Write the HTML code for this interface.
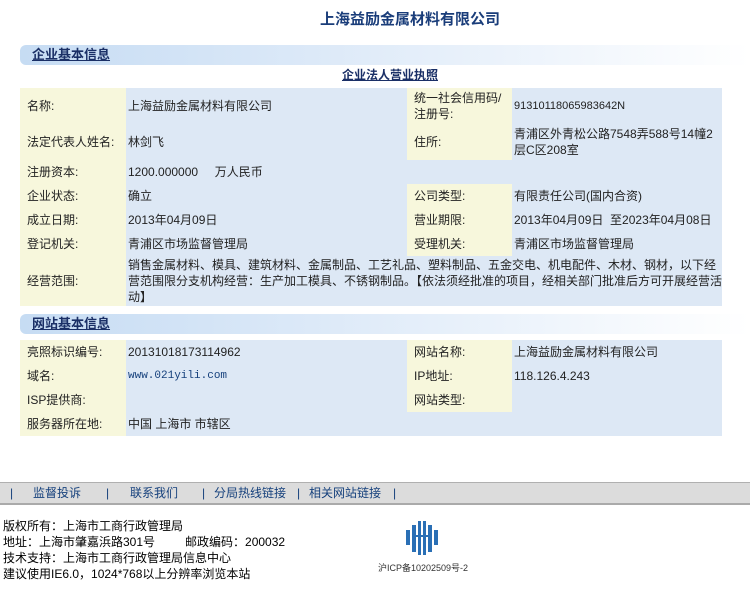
<!DOCTYPE html><html><head><meta charset="utf-8"><style>
body{margin:0;width:750px;height:589px;background:#fff;font-family:"Liberation Sans","SimSun","Noto Sans CJK SC",sans-serif;font-size:12px;color:#222;position:relative;overflow:hidden}
.a{position:absolute}
.title{left:0;width:820px;top:8px;text-align:center;font-size:15px;font-weight:bold;color:#1a3d7a}
.bar{left:20px;width:730px;height:20px;border-radius:6px 0 0 6px;background:linear-gradient(90deg,#c6dcf3,#dce9f8 40%,#fff);font-weight:bold;font-size:13px;color:#1a2f66;line-height:20px;text-indent:12px;text-decoration:underline}
.sub{left:0;width:780px;top:66px;text-align:center;font-weight:bold;font-size:12px;color:#1a2f66;text-decoration:underline}
table{position:absolute;left:20px;width:702px;border-collapse:collapse;table-layout:fixed}
td{padding:0 0 0 2px;vertical-align:middle;line-height:16px}
td.l{background:#f7f7dc;padding-left:7px}
td.v{background:#dde8f5}
.nav{left:0;top:482px;width:750px;height:20px;background:#dcdcdc;border-top:1px solid #b0b0b0;border-bottom:2px solid #aaa;line-height:20px;font-size:12px;color:#15407c}
.foot{left:3px;top:518px;line-height:16px;font-size:12px;color:#000}
</style></head><body>
<div class="a title">上海益励金属材料有限公司</div>
<div class="a bar" style="top:45px">企业基本信息</div>
<div class="a sub">企业法人营业执照</div>
<table style="top:88px">
<col style="width:106px"><col style="width:281px"><col style="width:105px"><col style="width:210px">
<tr style="height:36px"><td class="l">名称:</td><td class="v">上海益励金属材料有限公司</td><td class="l">统一社会信用码/<br>注册号:</td><td class="v" style="font-size:11px">91310118065983642N</td></tr>
<tr style="height:36px"><td class="l">法定代表人姓名:</td><td class="v">林剑飞</td><td class="l">住所:</td><td class="v">青浦区外青松公路7548弄588号14幢2层C区208室</td></tr>
<tr style="height:24px"><td class="l">注册资本:</td><td class="v">1200.000000&nbsp;&nbsp;&nbsp;&nbsp; 万人民币</td><td class="v"></td><td class="v"></td></tr>
<tr style="height:24px"><td class="l">企业状态:</td><td class="v">确立</td><td class="l">公司类型:</td><td class="v">有限责任公司(国内合资)</td></tr>
<tr style="height:24px"><td class="l">成立日期:</td><td class="v">2013年04月09日</td><td class="l">营业期限:</td><td class="v">2013年04月09日&nbsp; 至2023年04月08日</td></tr>
<tr style="height:24px"><td class="l">登记机关:</td><td class="v">青浦区市场监督管理局</td><td class="l">受理机关:</td><td class="v">青浦区市场监督管理局</td></tr>
<tr style="height:50px"><td class="l">经营范围:</td><td class="v" colspan="3">销售金属材料、模具、建筑材料、金属制品、工艺礼品、塑料制品、五金交电、机电配件、木材、钢材，以下经营范围限分支机构经营：生产加工模具、不锈钢制品。【依法须经批准的项目，经相关部门批准后方可开展经营活动】</td></tr>
</table>
<div class="a bar" style="top:314px">网站基本信息</div>
<table style="top:340px">
<col style="width:106px"><col style="width:281px"><col style="width:105px"><col style="width:210px">
<tr style="height:24px"><td class="l">亮照标识编号:</td><td class="v">20131018173114962</td><td class="l">网站名称:</td><td class="v">上海益励金属材料有限公司</td></tr>
<tr style="height:24px"><td class="l">域名:</td><td class="v" style="font-family:'Liberation Mono',monospace;font-size:11px;color:#15407c">www.021yili.com</td><td class="l">IP地址:</td><td class="v">118.126.4.243</td></tr>
<tr style="height:24px"><td class="l">ISP提供商:</td><td class="v"></td><td class="l">网站类型:</td><td class="v"></td></tr>
<tr style="height:24px"><td class="l">服务器所在地:</td><td class="v">中国 上海市 市辖区</td><td class="v"></td><td class="v"></td></tr>
</table>
<div class="a nav"><span class="a" style="left:10px">|</span><span class="a" style="left:33px">监督投诉</span><span class="a" style="left:106px">|</span><span class="a" style="left:130px">联系我们</span><span class="a" style="left:202px">|</span><span class="a" style="left:214px">分局热线链接</span><span class="a" style="left:297px">|</span><span class="a" style="left:309px">相关网站链接</span><span class="a" style="left:393px">|</span></div>
<div class="a foot">版权所有：上海市工商行政管理局<br>地址：上海市肇嘉浜路301号&nbsp;&nbsp;&nbsp;&nbsp;&nbsp;&nbsp;&nbsp;&nbsp; 邮政编码：200032<br>技术支持：上海市工商行政管理局信息中心<br>建议使用IE6.0，1024*768以上分辨率浏览本站</div>
<svg class="a" style="left:406px;top:520px" width="32" height="36" viewBox="0 0 32 36"><g fill="#2a6fb5"><rect x="0" y="10" width="4" height="15"/><rect x="6" y="5" width="4" height="27"/><rect x="12" y="1" width="3" height="34"/><rect x="17" y="1" width="3" height="34"/><rect x="22" y="5" width="4" height="27"/><rect x="28" y="10" width="4" height="15"/><rect x="8" y="15" width="16" height="2"/></g></svg>
<div class="a" style="left:378px;top:561px;font-size:9px;color:#333">沪ICP备10202509号-2</div>
</body></html>
